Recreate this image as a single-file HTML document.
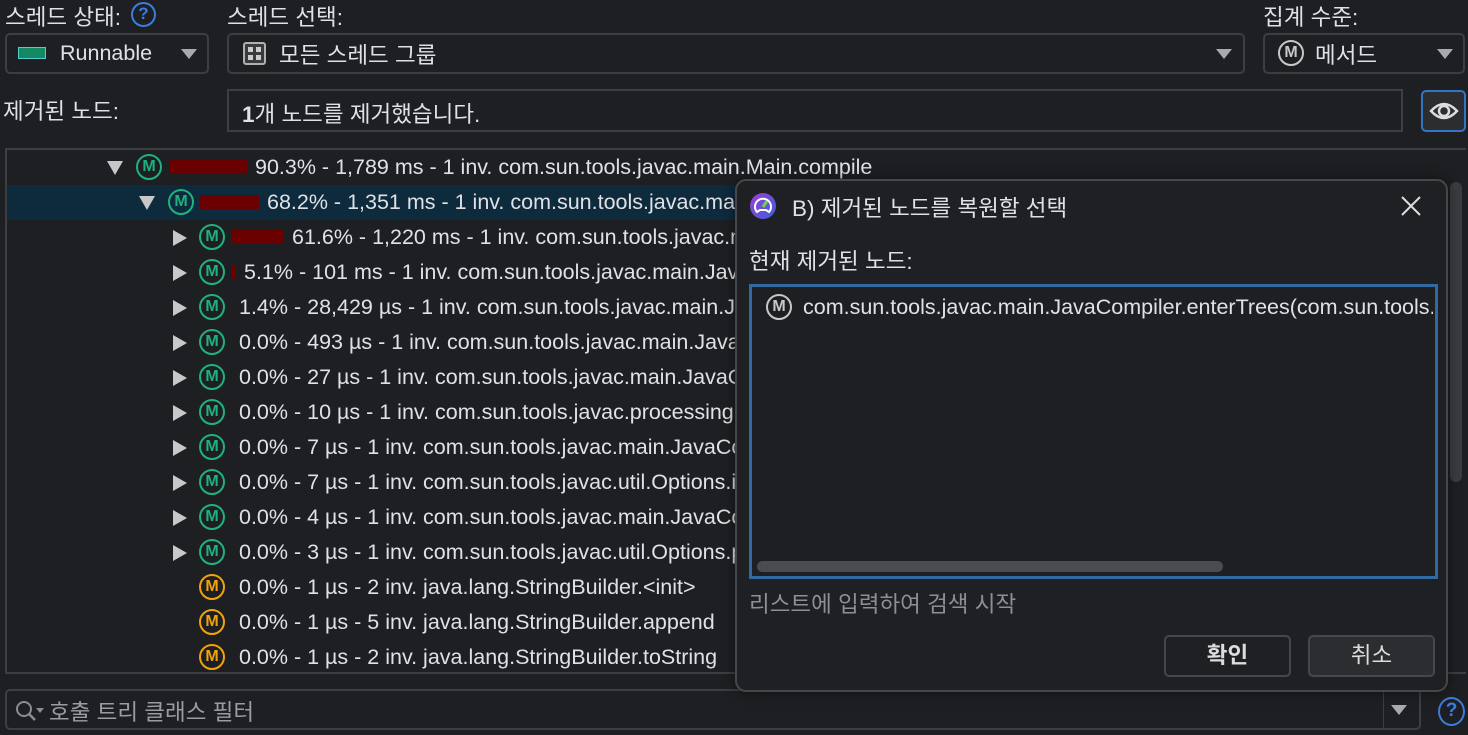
<!DOCTYPE html>
<html><head><meta charset="utf-8"><style>
*{box-sizing:border-box;margin:0;padding:0}
body{width:1468px;height:735px;background:#1e1f22;color:#dfe1e5;font-family:"Liberation Sans","Noto Sans CJK KR",sans-serif;font-size:21.5px;position:relative;overflow:hidden}
.a{position:absolute;white-space:nowrap}
.k{font-size:22.5px}
.box{position:absolute;border:2px solid #3c3e42;border-radius:5px}
.tri{position:absolute;width:0;height:0}
.dd{border-left:8px solid transparent;border-right:8px solid transparent;border-top:10px solid #a8aaae}
.tdown{border-left:8px solid transparent;border-right:8px solid transparent;border-top:14px solid #c8c8c8}
.tright{border-top:8px solid transparent;border-bottom:8px solid transparent;border-left:14px solid #c8c8c8}
.m{position:absolute;width:26px;height:26px;border-radius:50%;border:2.5px solid #1fb27e;color:#1fb27e;font-weight:bold;font-size:16px;line-height:21px;text-align:center}
.m.o{border-color:#f0a30a;color:#f0a30a}
.bar{position:absolute;height:14px;background:#6b0000}
</style></head><body>
<div class="a k" style="left:5px;top:0px">스레드 상태:</div>
<div class="a" style="left:131px;top:2px;width:25px;height:25px;border:2.5px solid #3b7ddd;border-radius:50%;color:#3b7ddd;font-size:17px;font-weight:bold;text-align:center;line-height:20px">?</div>
<div class="a k" style="left:227px;top:0px">스레드 선택:</div>
<div class="a k" style="left:1263px;top:0px">집계 수준:</div>

<div class="box" style="left:5px;top:33px;width:204px;height:41px"></div>
<div class="a" style="left:18px;top:47px;width:28px;height:12px;background:#138a63;border:1px solid #5cc"></div>
<div class="a" style="left:60px;top:41px">Runnable</div>
<div class="tri dd" style="left:181px;top:49px"></div>

<div class="box" style="left:227px;top:33px;width:1018px;height:41px"></div>
<div class="a" style="left:243px;top:42px;width:23px;height:23px;border:2px solid #b0b0b0;border-radius:3px;background:#3a3b3e"></div>
<div class="a" style="left:248px;top:47px;width:5px;height:5px;background:#ccc"></div>
<div class="a" style="left:256px;top:47px;width:5px;height:5px;background:#ccc"></div>
<div class="a" style="left:248px;top:55px;width:5px;height:5px;background:#ccc"></div>
<div class="a" style="left:256px;top:55px;width:5px;height:5px;background:#ccc"></div>
<div class="a k" style="left:279px;top:38px">모든 스레드 그룹</div>
<div class="tri dd" style="left:1216px;top:49px"></div>

<div class="box" style="left:1263px;top:33px;width:202px;height:41px"></div>
<div class="m" style="left:1278px;top:40px;border-color:#c8c8c8;color:#c8c8c8">M</div>
<div class="a k" style="left:1315px;top:38px">메서드</div>
<div class="tri dd" style="left:1437px;top:49px"></div>

<div class="a k" style="left:3px;top:94px">제거된 노드:</div>
<div class="a" style="left:227px;top:89px;width:1176px;height:43px;border:2px solid #3c3e42"></div>
<div class="a k" style="left:242px;top:97px"><b>1</b>개 노드를 제거했습니다.</div>
<div class="a" style="left:1421px;top:90px;width:45px;height:42px;border:2px solid #3574c0;border-radius:5px;background:#2b2d30"></div>
<svg class="a" style="left:1428px;top:99px" width="32" height="24" viewBox="0 0 32 24"><path d="M3 12 Q16 -2 29 12 Q16 26 3 12Z" fill="none" stroke="#ddd" stroke-width="2.5"/><circle cx="16" cy="12" r="5" fill="none" stroke="#ddd" stroke-width="2.5"/></svg>

<div class="a" style="left:5px;top:148px;width:1461px;height:526px;border:2px solid #3c3e42;border-right:none"></div>
<div class="a" style="left:7px;top:185px;width:1440px;height:35px;background:#0e2a3d"></div>
<div class="a" style="left:1450px;top:182px;width:12px;height:300px;background:#3a3c40;border-radius:6px"></div>

<div class="tri tdown" style="left:107px;top:161px"></div><div class="m" style="left:136px;top:154px">M</div><div class="bar" style="left:170px;top:160px;width:77px"></div><div class="a" style="left:255px;top:155px">90.3% - 1,789 ms - 1 inv. com.sun.tools.javac.main.Main.compile</div>
<div class="tri tdown" style="left:139px;top:196px"></div><div class="m" style="left:168px;top:189px">M</div><div class="bar" style="left:200px;top:195px;width:59px"></div><div class="a" style="left:267px;top:190px">68.2% - 1,351 ms - 1 inv. com.sun.tools.javac.main.JavaCompiler.compile</div>
<div class="tri tright" style="left:173px;top:230px"></div><div class="m" style="left:199px;top:224px">M</div><div class="bar" style="left:232px;top:230px;width:52px"></div><div class="a" style="left:292px;top:225px">61.6% - 1,220 ms - 1 inv. com.sun.tools.javac.main.JavaCompiler</div>
<div class="tri tright" style="left:173px;top:265px"></div><div class="m" style="left:199px;top:259px">M</div><div class="bar" style="left:232px;top:265px;width:4px"></div><div class="a" style="left:244px;top:260px">5.1% - 101 ms - 1 inv. com.sun.tools.javac.main.JavaCompiler</div>
<div class="tri tright" style="left:173px;top:300px"></div><div class="m" style="left:199px;top:294px">M</div><div class="a" style="left:239px;top:295px">1.4% - 28,429 µs - 1 inv. com.sun.tools.javac.main.JavaCompiler</div>
<div class="tri tright" style="left:173px;top:335px"></div><div class="m" style="left:199px;top:329px">M</div><div class="a" style="left:239px;top:330px">0.0% - 493 µs - 1 inv. com.sun.tools.javac.main.JavaCompiler</div>
<div class="tri tright" style="left:173px;top:370px"></div><div class="m" style="left:199px;top:364px">M</div><div class="a" style="left:239px;top:365px">0.0% - 27 µs - 1 inv. com.sun.tools.javac.main.JavaCompiler</div>
<div class="tri tright" style="left:173px;top:405px"></div><div class="m" style="left:199px;top:399px">M</div><div class="a" style="left:239px;top:400px">0.0% - 10 µs - 1 inv. com.sun.tools.javac.processing.JavacProc</div>
<div class="tri tright" style="left:173px;top:440px"></div><div class="m" style="left:199px;top:434px">M</div><div class="a" style="left:239px;top:435px">0.0% - 7 µs - 1 inv. com.sun.tools.javac.main.JavaCompiler</div>
<div class="tri tright" style="left:173px;top:475px"></div><div class="m" style="left:199px;top:469px">M</div><div class="a" style="left:239px;top:470px">0.0% - 7 µs - 1 inv. com.sun.tools.javac.util.Options.isSet</div>
<div class="tri tright" style="left:173px;top:510px"></div><div class="m" style="left:199px;top:504px">M</div><div class="a" style="left:239px;top:505px">0.0% - 4 µs - 1 inv. com.sun.tools.javac.main.JavaCompiler</div>
<div class="tri tright" style="left:173px;top:545px"></div><div class="m" style="left:199px;top:539px">M</div><div class="a" style="left:239px;top:540px">0.0% - 3 µs - 1 inv. com.sun.tools.javac.util.Options.put</div>
<div class="m o" style="left:199px;top:574px">M</div><div class="a" style="left:239px;top:575px">0.0% - 1 µs - 2 inv. java.lang.StringBuilder.&lt;init&gt;</div>
<div class="m o" style="left:199px;top:609px">M</div><div class="a" style="left:239px;top:610px">0.0% - 1 µs - 5 inv. java.lang.StringBuilder.append</div>
<div class="m o" style="left:199px;top:644px">M</div><div class="a" style="left:239px;top:645px">0.0% - 1 µs - 2 inv. java.lang.StringBuilder.toString</div>

<div class="box" style="left:5px;top:689px;width:1416px;height:41px"></div>
<div class="a" style="left:1383px;top:691px;width:1px;height:37px;background:#3c3e42"></div>
<div class="tri dd" style="left:1391px;top:705px"></div>
<svg class="a" style="left:14px;top:698px" width="32" height="26"><circle cx="10" cy="11" r="7" fill="none" stroke="#8a8c90" stroke-width="2"/><path d="M15 16 L21 22" stroke="#8a8c90" stroke-width="2.5"/><path d="M22 10 L30 10 L26 15Z" fill="#8a8c90"/></svg>
<div class="a k" style="left:49px;top:695px;color:#9a9ca0">호출 트리 클래스 필터</div>
<div class="a" style="left:1438px;top:697px;width:27px;height:29px;border:2.5px solid #3b7ddd;border-radius:50%;color:#3b7ddd;font-size:19px;font-weight:bold;text-align:center;line-height:24px">?</div>

<div class="a" style="left:735px;top:179px;width:713px;height:513px;background:#1f2023;border:2px solid #45474b;border-radius:11px;box-shadow:0 0 12px rgba(0,0,0,.5)"></div>
<svg class="a" style="left:749px;top:192px" width="30" height="30"><defs><linearGradient id="g" x1="0" y1="0" x2="1" y2="1"><stop offset="0" stop-color="#9b3fd0"/><stop offset="1" stop-color="#3d5fe0"/></linearGradient></defs><circle cx="14" cy="14" r="13" fill="url(#g)"/><path d="M8 20 A8 8 0 1 1 20 20 L17 18 L11 18Z" fill="none" stroke="#fff" stroke-width="2"/><path d="M14 15 L18 9" stroke="#6fd24a" stroke-width="3"/></svg>
<div class="a k" style="left:792px;top:191px">B) 제거된 노드를 복원할 선택</div>
<svg class="a" style="left:1400px;top:195px" width="22" height="22"><path d="M2 2 L20 20 M20 2 L2 20" stroke="#ddd" stroke-width="2"/></svg>
<div class="a k" style="left:749px;top:244px">현재 제거된 노드:</div>
<div class="a" style="left:749px;top:284px;width:689px;height:295px;border:3px solid #2f6aa5;background:#1e1f22"></div>
<div class="m" style="left:766px;top:294px;border-color:#c8c8c8;color:#c8c8c8">M</div>
<div class="a" style="left:803px;top:295px;width:630px;overflow:hidden">com.sun.tools.javac.main.JavaCompiler.enterTrees(com.sun.tools.javac.util.List)</div>
<div class="a" style="left:757px;top:561px;width:466px;height:11px;background:#4a4c50;border-radius:6px"></div>
<div class="a k" style="left:749px;top:587px;color:#8d8f93">리스트에 입력하여 검색 시작</div>
<div class="a k" style="left:1164px;top:635px;width:127px;height:42px;border:2px solid #45474b;border-radius:5px;text-align:center;line-height:37px;font-weight:bold;color:#ddd">확인</div>
<div class="a k" style="left:1308px;top:635px;width:127px;height:42px;border:2px solid #45474b;border-radius:5px;background:#2b2d30;text-align:center;line-height:37px;color:#ddd">취소</div>
</body></html>
